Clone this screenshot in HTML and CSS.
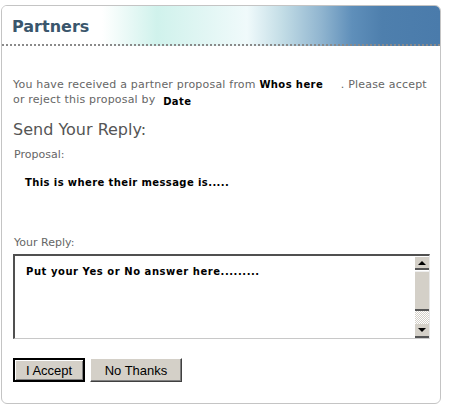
FILE: index.html
```html
<!DOCTYPE html>
<html>
<head>
<meta charset="utf-8">
<link rel="stylesheet" href="styles.css">
</head>
<body>
<div class="card">
  <div class="card-head"><h1 class="title">Partners</h1></div>
  <div class="card-body">
    <p class="intro">You have received a partner proposal from <b class="strong who">Whos here</b> . Please accept<br>or reject this proposal by <b class="strong date">Date</b></p>
    <h2 class="section">Send Your Reply:</h2>
    <div class="label">Proposal:</div>
    <div class="message">This is where their message is.....</div>
    <div class="label reply-label">Your Reply:</div>
    <div class="reply">
      <div class="reply-text">Put your Yes or No answer here.........</div>
      <div class="scrollbar">
        <div class="sb-btn"><span class="arrow up"></span></div>
        <div class="sb-thumb"></div>
        <div class="sb-track"></div>
        <div class="sb-btn"><span class="arrow down"></span></div>
      </div>
    </div>
    <div class="buttons">
      <button class="btn default">I Accept</button>
      <button class="btn">No Thanks</button>
    </div>
  </div>
</div>
</body>
</html>
```
FILE: styles.css
```css
html, body { margin: 0; padding: 0; background: #fff; }
body { font-family: "DejaVu Sans", Verdana, sans-serif; }
.card {
  margin: 5px 0 0 1px;
  width: 438px;
  height: 397px;
  border: 1px solid #c4c4c4;
  border-radius: 6px;
  overflow: hidden;
}
.card-head {
  height: 38px;
  border-bottom: 2px dotted #8a8a8a;
  background: linear-gradient(90deg, #ffffff 0px, #ffffff 100px, #d0f2ec 155px, #e2f6f4 205px, #f0fafb 245px, #c3dde6 280px, #8fb4cf 320px, #5f8fba 350px, #4e7fad 380px, #4a7bab 438px);
  display: flex;
  align-items: center;
}
.title {
  margin: 0 0 0 10px;
  font-size: 16px;
  font-weight: bold;
  color: #3a566c;
  padding-top: 2px;
}
.card-body { padding: 0 10px 0 11px; }
.intro {
  margin: 31px 0 0 0;
  font-size: 11px;
  line-height: 15px;
  color: #666;
  letter-spacing: 0.2px;
  white-space: nowrap;
}
.strong {
  font-family: "DejaVu Sans", sans-serif;
  font-weight: bold;
  color: #000;
  font-size: 10px;
  letter-spacing: 0.4px;
}
.who { margin-right: 14px; }
.date { margin-left: 4px; vertical-align: -2px; line-height: 10px; }
.section {
  margin: 13px 0 0 0;
  font-size: 16px;
  font-weight: normal;
  color: #555;
  line-height: 19px;
}
.label {
  margin: 9px 0 0 1px;
  font-size: 11px;
  color: #666;
  line-height: 14px;
}
.message {
  margin: 15px 0 0 12px;
  font-size: 10px;
  font-weight: bold;
  letter-spacing: 0.4px;
  color: #000;
  height: 52px;
}
.reply-label { margin-top: 7px; }
.reply {
  margin: 4px 0 0 0;
  width: 414px;
  height: 82px;
  border-top: 2px solid #505050;
  border-left: 2px solid #505050;
  border-bottom: 1px solid #c8c8c8;
  border-right: 1px solid #e8e8e8;
  display: flex;
  justify-content: space-between;
}
.reply-text {
  padding: 10px 0 0 11px;
  font-size: 10px;
  font-weight: bold;
  letter-spacing: 0.55px;
  color: #000;
}
.scrollbar {
  width: 14px;
  display: flex;
  flex-direction: column;
}
.sb-btn {
  height: 14px;
  background: #d4d0c8;
  border-bottom: 2px solid #555;
  display: flex;
  align-items: center;
  justify-content: center;
  box-sizing: border-box;
}
.sb-btn:first-child { border-top: 1px solid #fff; }
.sb-thumb {
  height: 40px;
  background: #d4d0c8;
  border-top: 1px solid #eee;
  border-bottom: 2px solid #555;
  box-sizing: border-box;
  margin-top: 1px;
}
.sb-track {
  flex: 1;
  background-color: #eae8e4;
  background-image: repeating-conic-gradient(#d4d0c8 0 25%, #ffffff 0 50%);
  background-size: 2px 2px;
}
.arrow { width: 0; height: 0; border-left: 4px solid transparent; border-right: 4px solid transparent; }
.arrow.up { border-bottom: 4px solid #000; }
.arrow.down { border-top: 4px solid #000; }
.buttons {
  margin: 19px 0 0 0;
  display: flex;
  gap: 5px;
}
.btn {
  font-family: "Liberation Sans", Arial, sans-serif;
  font-size: 13px;
  height: 24px;
  padding: 0;
  background: #d4d0c8;
  color: #000;
  border: 1px solid;
  border-color: #fff #404040 #404040 #fff;
  box-shadow: inset -1px -1px 0 #808080;
}
.btn.default {
  width: 72px;
  border: 2px solid #000;
  box-shadow: inset 1px 1px 0 #fff, inset -1px -1px 0 #808080;
}
.btn:not(.default) { width: 92px; }
```
